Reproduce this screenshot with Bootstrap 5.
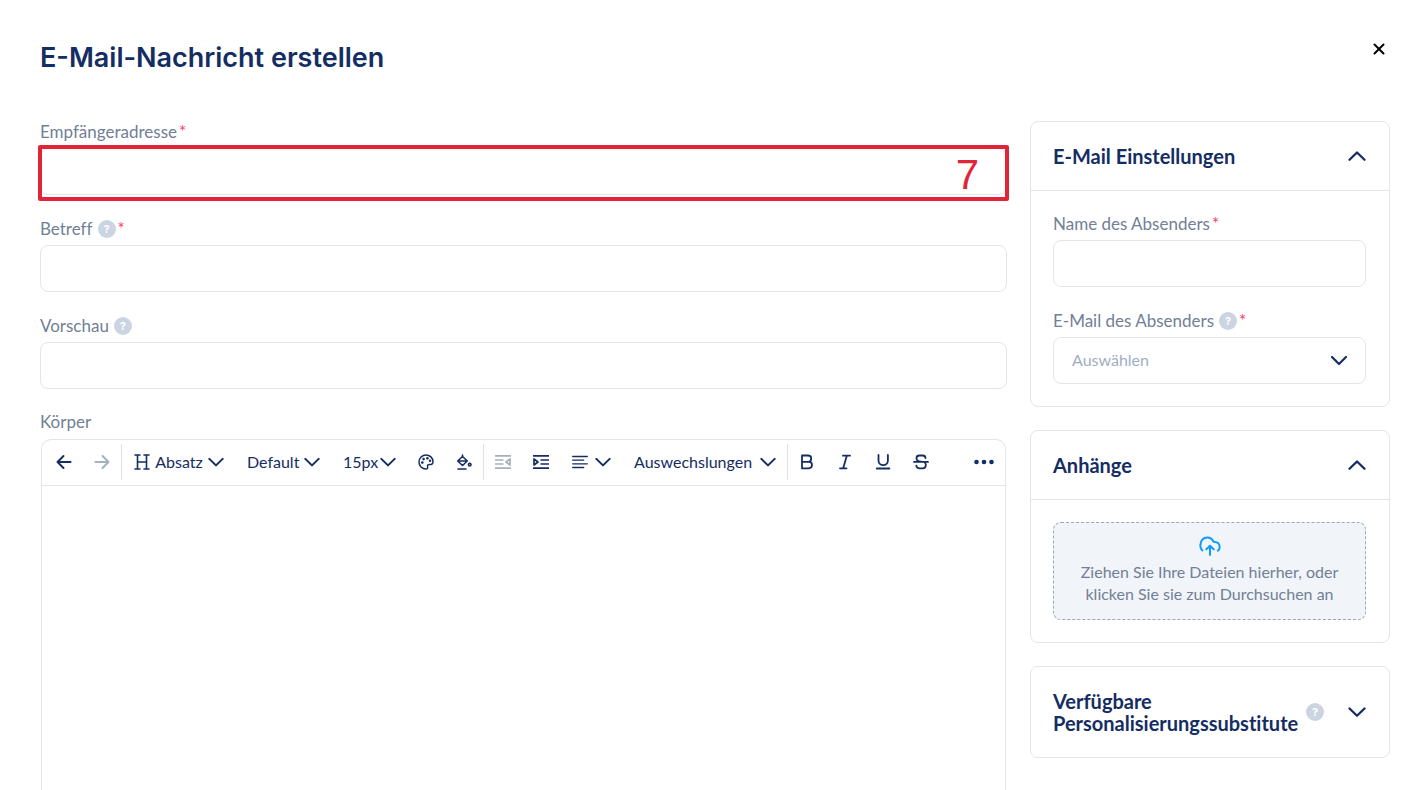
<!DOCTYPE html>
<html lang="de">
<head>
<meta charset="utf-8">
<meta name="viewport" content="width=device-width, initial-scale=1">
<title>E-Mail-Nachricht erstellen</title>
<link href="https://cdn.jsdelivr.net/npm/bootstrap@5.3.0/dist/css/bootstrap.min.css" rel="stylesheet">
<style>
:root { --navy: #142d63; --muted: #718096; --line: #e2e6e9; }
body { font-family: Lato, "Liberation Sans", sans-serif; font-size: 16px; font-variant-ligatures: none; color: var(--navy); background: #fff; }
svg { display: block; flex: none; fill: none; stroke: currentColor; stroke-width: 2; stroke-linecap: round; stroke-linejoin: round; }
.page { padding: 0 34px 0 40px; }
.page-head { height: 121px; padding-top: 40px; }
.page-title { font: 600 27px/36px Inter, sans-serif; color: var(--navy); }
.close-btn { color: #000; padding: 3px 5px; }
.columns { gap: 23px; }
.sidebar { width: 360px; gap: 23px; flex: none; }
.field + .field { margin-top: 23px; }
.field + .editor-field { margin-top: 22px; }
.field-head { height: 22px; margin-bottom: 5px; color: var(--muted); }
.editor-field .field-head { margin-bottom: 6px; }
.field-head label, .field-head .caption { font-size: 17px; line-height: 22px; }
.req { color: #ff3b68; font-size: 17px; line-height: 22px; margin-left: 2px; }
.help { width: 18px; height: 18px; border-radius: 50%; border: 0; padding: 0; flex: none; background: #cbd5e1; color: #fff; font: 700 11px/18px Inter, sans-serif; text-align: center; }
.field-head .help { margin-left: 5px; }
.form-control, .form-select { height: 47px; border: 1px solid var(--line); border-radius: 8px; font-size: 16px; }
.form-select { color: #a0aec0; padding: 0 40px 2px 18px; background-position: right 17px center; background-size: 18px 18px;
  background-image: url("data:image/svg+xml,%3Csvg xmlns='http://www.w3.org/2000/svg' viewBox='0 0 18 18'%3E%3Cpath d='M2 5l7 7 7-7' fill='none' stroke='%23142d63' stroke-width='2.2' stroke-linecap='round' stroke-linejoin='round'/%3E%3C/svg%3E"); }
.callout { position: absolute; inset: -3px -2px -6px; border: 4px solid #e22438; border-radius: 2px; pointer-events: none; color: #e22438; font: 42px/52px "Liberation Sans", sans-serif; text-align: right; padding-right: 26px; }
.editor { margin: 0 1px; border: 1px solid var(--line); border-bottom: 0; border-radius: 10px 10px 0 0; }
.toolbar { height: 46px; padding: 0 2px 2px 3px; border-bottom: 1px solid var(--line); }
.tool, .tool-menu { border: 0; background: none; padding: 0; height: 36px; color: var(--navy); display: flex; align-items: center; justify-content: center; flex: none; }
.tool { width: 38px; }
.tool:disabled { color: #a3b1bc; }
.tool-menu { padding: 0 11px 0 12px; justify-content: space-between; white-space: nowrap; font-size: 16px; }
.tool-menu svg:last-child { stroke-width: 2.3; }
.w-format { width: 113px; } .w-font { width: 96px; } .w-size { width: 76px; } .w-align { width: 62px; } .w-subst { width: 165px; }
.divider { width: 1px; height: 36px; background: #dfe3e6; flex: none; }
.panel { border: 1px solid var(--line); border-radius: 8px; }
.panel-head { padding: 23px 23px 23px 22px; border: 0; background: none; color: var(--navy); width: 100%; text-align: left; }
.panel-head svg { color: var(--navy); stroke-width: 2.3; }
.panel-head.open { border-bottom: 1px solid var(--line); }
.panel-title { font-size: 20px; line-height: 22px; font-weight: 700; white-space: nowrap; }
.panel-content { padding: 22px 23px 22px 22px; }
.dropzone { width: 100%; height: 98px; border: 1px dashed #9aa7b4; border-radius: 8px; background: #f1f4f9; color: var(--muted); line-height: 22px; padding: 0 4px 2px; white-space: nowrap; }
.dropzone svg { color: #0a9dfb; margin: 0 auto 4px; }
</style>
</head>
<body>
<svg class="d-none" aria-hidden="true">
  <symbol id="down" viewBox="0 0 18 18"><path d="M1.500 5.500L9 12.800l7.500-7.300"/></symbol>
  <symbol id="up" viewBox="0 0 18 18"><path d="M1.500 12.800L9 5.500l7.500 7.300"/></symbol>
</svg>
<div class="page vh-100 d-flex flex-column overflow-hidden">
  <header class="page-head d-flex justify-content-between align-items-start flex-shrink-0">
    <h1 class="page-title m-0">E-Mail-Nachricht erstellen</h1>
    <button class="close-btn btn border-0" type="button" aria-label="Schließen"><svg width="12" height="12" viewBox="0 0 12 12"><path d="M1.500 1.500l9 9M10.500 1.500l-9 9"/></svg></button>
  </header>
  <div class="columns d-flex flex-grow-1">
    <main class="flex-grow-1 d-flex flex-column">
      <div class="field">
        <div class="field-head d-flex align-items-center"><label for="to">Empfängeradresse</label><span class="req">*</span></div>
        <div class="position-relative"><input class="form-control" id="to" type="email"><div class="callout">7</div></div>
      </div>
      <div class="field">
        <div class="field-head d-flex align-items-center"><label for="subject">Betreff</label><button class="help" type="button">?</button><span class="req">*</span></div>
        <input class="form-control" id="subject" type="text">
      </div>
      <div class="field">
        <div class="field-head d-flex align-items-center"><label for="preview">Vorschau</label><button class="help" type="button">?</button></div>
        <input class="form-control" id="preview" type="text">
      </div>
      <div class="editor-field flex-grow-1 d-flex flex-column">
        <div class="field-head d-flex align-items-center"><span class="caption" id="body-label">Körper</span></div>
        <div class="editor flex-grow-1">
          <div class="toolbar d-flex align-items-center" role="toolbar">
            <button class="tool" type="button" aria-label="Rückgängig"><svg width="16" height="16" viewBox="0 0 16 16"><path d="M14.500 8h-13M7.500 2l-6 6 6 6"/></svg></button>
            <button class="tool" type="button" disabled aria-label="Wiederholen"><svg width="16" height="16" viewBox="0 0 16 16"><path d="M1.500 8h13M8.500 2l6 6-6 6"/></svg></button>
            <span class="divider"></span>
            <button class="tool-menu w-format" type="button"><svg width="16" height="16" viewBox="0 0 16 16"><path stroke-width="1.600" d="M3.500 1v14M12.500 1v14M3.500 8h9M1 1h5M10 1h5M1 15h5M10 15h5"/></svg>Absatz<svg width="16" height="16"><use href="#down"/></svg></button>
            <button class="tool-menu w-font" type="button">Default<svg width="16" height="16"><use href="#down"/></svg></button>
            <button class="tool-menu w-size" type="button">15px<svg width="16" height="16"><use href="#down"/></svg></button>
            <button class="tool" type="button" aria-label="Textfarbe"><svg width="16" height="16" viewBox="0 0 16 16"><path stroke-width="1.500" d="M8 1a7 7 0 0 0 0 14c1.500 0 1.900-1 1.600-2-.5-1.800.4-2.700 1.900-2.500 2 .3 3.500-.6 3.500-2.700C15 3.800 11.800 1 8 1z"/><g fill="currentColor" stroke="none"><circle cx="4.300" cy="8.600" r="1.300"/><circle cx="5.600" cy="5.100" r="1.300"/><circle cx="9.400" cy="4.200" r="1.300"/><circle cx="12" cy="6.800" r="1.200"/></g></svg></button>
            <button class="tool" type="button" aria-label="Hintergrundfarbe"><svg width="16" height="16" viewBox="0 0 16 16"><g stroke-width="1.600"><path d="M6.500 1v1.500l4.800 4.500-4.800 4.500-4.800-4.500 4.800-4.500M1.700 7h9.600M2 15h8"/><circle cx="13.700" cy="10.700" r="1.300"/></g></svg></button>
            <span class="divider"></span>
            <button class="tool" type="button" disabled aria-label="Einzug verkleinern"><svg width="16" height="16" viewBox="0 0 16 16"><path stroke-width="1.700" stroke-linecap="butt" d="M0 1.800h16M0 6h8.500M0 10h8.500M0 14.200h16M15 5v6l-4-3z"/></svg></button>
            <button class="tool" type="button" aria-label="Einzug vergrößern"><svg width="16" height="16" viewBox="0 0 16 16"><path stroke-width="1.700" stroke-linecap="butt" d="M0 1.800h16M7.500 6H16M7.500 10H16M0 14.200h16M1 5v6l4-3z"/></svg></button>
            <button class="tool-menu w-align" type="button" aria-label="Ausrichtung"><svg width="16" height="16" viewBox="0 0 16 16"><path stroke-width="1.300" d="M.7 2.500h14.600M.7 6.200h11M.7 9.800h14.600M.7 13.500h11"/></svg><svg width="16" height="16"><use href="#down"/></svg></button>
            <button class="tool-menu w-subst" type="button">Auswechslungen<svg width="16" height="16"><use href="#down"/></svg></button>
            <span class="divider"></span>
            <button class="tool" type="button" aria-label="Fett"><svg width="16" height="16" viewBox="0 0 16 16"><path stroke-width="1.800" d="M3 1.500h6a3.200 3.200 0 0 1 0 6.400H3zM3 7.900h6.800a3.200 3.200 0 0 1 0 6.400H3z"/></svg></button>
            <button class="tool" type="button" aria-label="Kursiv"><svg width="16" height="16" viewBox="0 0 16 16"><path stroke-width="1.800" d="M6 1.700h7M3 14.300h6.500M9.800 1.700l-3.600 12.600"/></svg></button>
            <button class="tool" type="button" aria-label="Unterstrichen"><svg width="16" height="16" viewBox="0 0 16 16"><path stroke-width="1.800" d="M3.500 1v5.500a4.700 4.700 0 0 0 9.400 0V1M1.800 14.500h12.600"/></svg></button>
            <button class="tool" type="button" aria-label="Durchgestrichen"><svg width="16" height="16" viewBox="0 0 16 16"><path stroke-width="1.800" d="M12.500 4c0-1.700-1.400-2.500-3-2.500h-3C4.800 1.500 3.500 2.500 3.500 4c0 2 1.500 3.500 4.500 3.700M1 7.900h14M11 7.900c1.200.6 1.800 1.700 1.800 2.800 0 2-1.400 3.600-3.300 3.600h-3c-1.700 0-3-1-3.200-2.700"/></svg></button>
            <button class="tool ms-auto" type="button" aria-label="Mehr"><svg width="20" height="16" viewBox="0 0 20 16"><g fill="currentColor" stroke="none"><circle cx="2.500" cy="8" r="2.300"/><circle cx="10" cy="8" r="2.300"/><circle cx="17.500" cy="8" r="2.300"/></g></svg></button>
          </div>
          <div class="p-3" contenteditable="true" role="textbox" aria-labelledby="body-label"></div>
        </div>
      </div>
    </main>
    <aside class="sidebar d-flex flex-column">
      <section class="panel">
        <button class="panel-head open d-flex align-items-center justify-content-between" type="button"><span class="panel-title">E-Mail Einstellungen</span><svg width="18" height="18"><use href="#up"/></svg></button>
        <div class="panel-content">
          <div class="field">
            <div class="field-head d-flex align-items-center"><label for="sender">Name des Absenders</label><span class="req">*</span></div>
            <input class="form-control" id="sender" type="text">
          </div>
          <div class="field">
            <div class="field-head d-flex align-items-center"><label for="sender-mail">E-Mail des Absenders</label><button class="help" type="button">?</button><span class="req">*</span></div>
            <select class="form-select" id="sender-mail"><option>Auswählen</option></select>
          </div>
        </div>
      </section>
      <section class="panel">
        <button class="panel-head open d-flex align-items-center justify-content-between" type="button"><span class="panel-title">Anhänge</span><svg width="18" height="18"><use href="#up"/></svg></button>
        <div class="panel-content">
          <button class="dropzone" type="button"><svg width="22" height="22" viewBox="0 0 22 22"><path d="M3.400 15.400A6.300 6.300 0 0 1 1.500 9.500C1.500 5.500 4.500 2.500 8.200 2.500c3 0 5.200 1.500 6.200 4.200 3.700-.2 6.300 2.100 6.300 5.200 0 1.600-.7 2.900-1.900 3.800M11 20v-9M7.300 14.200L11 10.800l3.700 3.400"/></svg>Ziehen Sie Ihre Dateien hierher, oder<br>klicken Sie sie zum Durchsuchen an</button>
        </div>
      </section>
      <section class="panel">
        <div class="panel-head d-flex align-items-center"><span class="panel-title">Verfügbare<br>Personalisierungssubstitute</span><button class="help ms-auto" type="button">?</button><button class="btn border-0 p-0 ms-4" type="button" aria-label="Aufklappen"><svg width="18" height="18"><use href="#down"/></svg></button></div>
      </section>
    </aside>
  </div>
</div>
<script src="https://cdn.jsdelivr.net/npm/bootstrap@5.3.0/dist/js/bootstrap.bundle.min.js"></script>
</body>
</html>
